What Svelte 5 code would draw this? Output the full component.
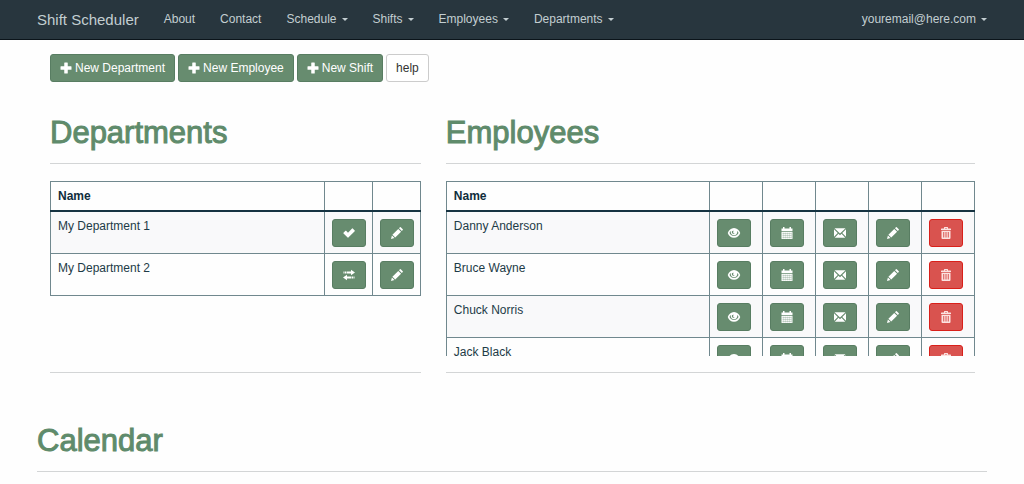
<script>
  const links = [
    { label: 'About' },
    { label: 'Contact' },
    { label: 'Schedule', menu: true },
    { label: 'Shifts', menu: true },
    { label: 'Employees', menu: true },
    { label: 'Departments', menu: true }
  ];
  const create = ['New Department', 'New Employee', 'New Shift'];
  const departments = [
    { name: 'My Department 1', icon: 'check', action: 'Current department' },
    { name: 'My Department 2', icon: 'transfer', action: 'Switch department' }
  ];
  const employees = ['Danny Anderson', 'Bruce Wayne', 'Chuck Norris', 'Jack Black'];
  const actions = [
    { icon: 'eye', label: 'View' },
    { icon: 'calendar', label: 'Schedule' },
    { icon: 'mail', label: 'Email' },
    { icon: 'pencil', label: 'Edit' },
    { icon: 'trash', label: 'Delete' }
  ];
</script>

{#snippet icon(name)}
  <svg class="icon" viewBox="0 0 24 24" aria-hidden="true">
    {#if name === 'plus'}
      <path d="M9.500 1h5a1 1 0 0 1 1 1v6.500H22a1 1 0 0 1 1 1v5a1 1 0 0 1-1 1h-6.500V22a1 1 0 0 1-1 1h-5a1 1 0 0 1-1-1v-6.500H2a1 1 0 0 1-1-1v-5a1 1 0 0 1 1-1h6.500V2a1 1 0 0 1 1-1z" />
    {:else if name === 'check'}
      <path d="M19.500 3 23.400 6.900a1 1 0 0 1 0 1.400L10.700 21a1 1 0 0 1-1.400 0L1 12.900a1 1 0 0 1 0-1.400l3.900-3.900a1 1 0 0 1 1.400 0L10 11.300 18.100 3a1 1 0 0 1 1.400 0z" />
    {:else if name === 'transfer'}
      <path d="M1 5h2v4H1zM4 5h2v4H4zM7 5h9V1.500L24 7l-8 5.500V9H7zM23 15h-2v4h2zM20 15h-2v4h2zM17 15H8v-3.500L0 17l8 5.500V19h9z" />
    {:else if name === 'pencil'}
      <path d="m19.500 .5 4 4a1.200 1.200 0 0 1 0 1.700l-1.800 1.800L16 2.300 17.800.5a1.200 1.200 0 0 1 1.700 0zM14.500 3.800l5.700 5.700L8.500 21.200 2.800 15.500zM1.800 17l5.200 5.200L0 24z" />
    {:else if name === 'eye'}
      <path fill-rule="evenodd" d="M12 2C6 2 1.500 6.500-.5 12c2 5.500 6.500 9.500 12.500 9.500s10.500-4 12.500-9.500C22.500 6.500 18 2 12 2zM3 12c.6-1.700 1.300-2.800 2.500-3.900C5 14 8 16.500 12 16.500s7-2.500 6.500-8.400C19.700 9.200 20.400 10.300 21 12c-1.800 4-5 6-9 6s-7.200-2-9-6zM8 8.500c1-1.500 2.800-1.500 3.800-.5-1.500.5-2 2-1.500 3.200.5 1 2 1.300 3 .8-.5 1.500-2.800 2-4.300.8C7.800 11.800 7.300 10 8 8.500z" />
    {:else if name === 'calendar'}
      <path fill-rule="evenodd" d="M4 0h3v3h10V0h3v3h3v5H1V3h3zM1 9.500h22V23a1 1 0 0 1-1 1H2a1 1 0 0 1-1-1z" />
      <path class="grid" d="M3 13h18M3 17h18M3 21h18M4.500 11v12M8.500 11v12M12.500 11v12M16.500 11v12M20.500 11v12" />
    {:else if name === 'mail'}
      <path d="M1 2.500h22L12 13zM0 4.500 7.500 12 0 19.500zM24 4.500v15L16.500 12zM9 13.500l3 2.800 3-2.800 7.500 8h-21z" />
    {:else if name === 'trash'}
      <path fill-rule="evenodd" d="M8 3V1a1 1 0 0 1 1-1h6a1 1 0 0 1 1 1v2h5a1 1 0 0 1 1 1v2H2V4a1 1 0 0 1 1-1zm2-1v1h4V2zM3 7.500h18V22a2 2 0 0 1-2 2H5a2 2 0 0 1-2-2zm3 2.500v11h1.500V10zm3.500 0v11H11V10zm3.500 0v11h1.500V10zm3.500 0v11H18V10z" />
    {/if}
  </svg>
{/snippet}

<nav class="navbar">
  <a class="brand" href="#home">Shift Scheduler</a>
  <ul class="links">
    {#each links as link}
      <li><a href="#{link.label.toLowerCase()}">{link.label}{#if link.menu}<span class="caret"></span>{/if}</a></li>
    {/each}
  </ul>
  <a class="account" href="#account">youremail@here.com<span class="caret"></span></a>
</nav>

<main>
  <div class="toolbar">
    {#each create as label}
      <button class="btn" type="button">{@render icon('plus')}{label}</button>
    {/each}
    <button class="btn plain" type="button">help</button>
  </div>

  <div class="panels">
    <section>
      <h1>Departments</h1>
      <div class="list">
        <table>
          <colgroup><col /><col class="narrow" /><col class="narrow" /></colgroup>
          <thead><tr><th>Name</th><th></th><th></th></tr></thead>
          <tbody>
            {#each departments as d}
              <tr>
                <td>{d.name}</td>
                <td class="action"><button class="btn square" type="button" aria-label={d.action}>{@render icon(d.icon)}</button></td>
                <td class="action"><button class="btn square" type="button" aria-label="Edit">{@render icon('pencil')}</button></td>
              </tr>
            {/each}
          </tbody>
        </table>
      </div>
    </section>

    <section>
      <h1>Employees</h1>
      <div class="list">
        <table>
          <colgroup><col />{#each actions as a}<col class="wide" />{/each}</colgroup>
          <thead><tr><th>Name</th>{#each actions as a}<th></th>{/each}</tr></thead>
          <tbody>
            {#each employees as name}
              <tr>
                <td>{name}</td>
                {#each actions as a}
                  <td class="action"><button class="btn square" class:danger={a.icon === 'trash'} type="button" aria-label="{a.label} {name}">{@render icon(a.icon)}</button></td>
                {/each}
              </tr>
            {/each}
          </tbody>
        </table>
      </div>
    </section>
  </div>

  <h1 class="calendar">Calendar</h1>
</main>

<style>
  :global(body) {
    margin: 0;
    background: #fefefe;
    color: #1d3b47;
    font: 12px/17px "Liberation Sans", Arial, sans-serif;
  }
  .navbar {
    display: flex;
    align-items: center;
    height: 39px;
    padding: 0 37px;
    background: #28363e;
    border-bottom: 1px solid #0b141a;
  }
  .navbar a {
    color: #c3ced1;
    text-decoration: none;
    white-space: nowrap;
  }
  .navbar .brand {
    font-size: 15px;
  }
  .links {
    display: flex;
    gap: 25px;
    margin: 0;
    padding: 0 25px;
    list-style: none;
  }
  .account {
    margin-left: auto;
  }
  .caret {
    display: inline-block;
    margin-left: 5px;
    vertical-align: middle;
    border: solid transparent;
    border-width: 3px 3px 0;
    border-top-color: currentColor;
  }
  main {
    padding: 14px 37px 0;
  }
  .toolbar {
    display: flex;
    gap: 3px;
    padding: 0 13px;
  }
  .btn {
    display: inline-flex;
    align-items: center;
    justify-content: center;
    gap: 3px;
    box-sizing: border-box;
    height: 28px;
    padding: 0 9px;
    border: 1px solid #587d62;
    border-radius: 3px;
    background: #678c6f;
    color: #fff;
    font: inherit;
  }
  .plain {
    background: #fff;
    border-color: #ccc;
    color: #333;
  }
  .square {
    width: 34px;
    padding: 0;
    vertical-align: top;
  }
  .danger {
    background: #d9534f;
    border-color: #d9201a;
    color: #fbe3e1;
  }
  .icon {
    width: 12px;
    height: 12px;
    fill: currentColor;
    overflow: visible;
  }
  .grid {
    fill: none;
    stroke: #678c6f;
    stroke-width: 0.6;
  }
  .panels {
    display: grid;
    grid-template-columns: 5fr 7fr;
  }
  section {
    min-width: 0;
    padding: 0 12px 0 13px;
  }
  h1 {
    margin: 34px 0 17px;
    padding-bottom: 13px;
    border-bottom: 1px solid #d3d5d6;
    color: #5f8b6b;
    font-size: 31px;
    line-height: 34px;
    font-weight: 500;
    -webkit-text-stroke: 1px #5f8b6b;
  }
  .list {
    height: 175px;
    overflow-y: auto;
    scrollbar-width: none;
  }
  section::after {
    content: "";
    display: block;
    margin-top: 16px;
    border-top: 1px solid #d3d5d6;
  }
  table {
    width: 100%;
    table-layout: fixed;
    border-collapse: collapse;
  }
  .narrow {
    width: 48px;
  }
  .wide {
    width: 53px;
  }
  th,
  td {
    border: 1px solid #70888e;
    padding: 6px 7px;
    text-align: left;
    vertical-align: top;
  }
  th {
    height: 16px;
    line-height: 16px;
    border-bottom: 2px solid #163341;
    color: #0f2d3c;
  }
  td.action {
    padding-top: 7px;
  }
  tbody tr:nth-child(odd) {
    background: #f9f9fa;
  }
  h1.calendar {
    margin: 51px 0 0;
  }
</style>
